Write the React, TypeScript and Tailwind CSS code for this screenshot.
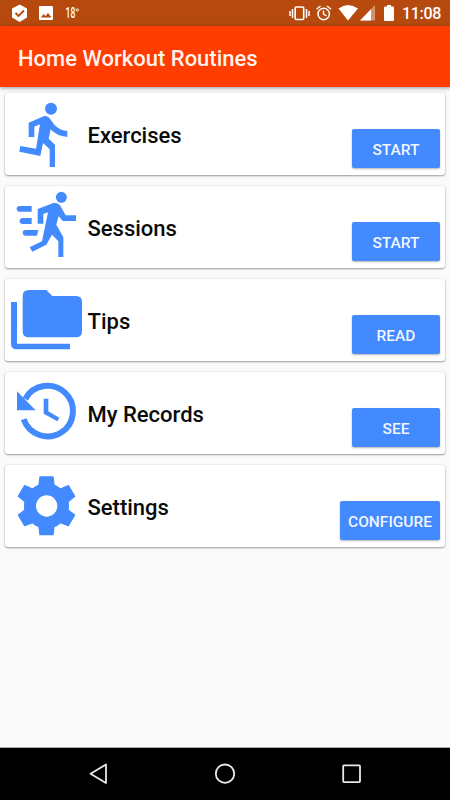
import React from "react";

const BLUE = "#448aff";

const icons = {
  run: (
    <svg viewBox="15 15 240 246" className="h-[82px] w-20 shrink-0" fill={BLUE}>
      <circle cx="153" cy="62" r="18" />
      <path d="M86 104 133 84Q144 82 150 92L163 110Q179 127 202 129V147Q169 144 152 124L146 152 165 170V237H149V184L129 165 121 204 58 191 61 174 108 182 120 109 103 116V147H86Z" />
    </svg>
  ),
  sprint: (
    <svg viewBox="15 18 240 246" className="h-[82px] w-20 shrink-0" fill={BLUE}>
      <circle cx="184" cy="52" r="16.5" />
      <path d="M113 87 160 69Q173 67 180 76L197 106H228V123H188L176 108 169 134 190 172V231H175V184L156 164 139 194 97 215 89 202 126 184 144 97 130 102V131H113Z" />
      <path d="M95 78V95H59Q50 95 50 86.500T59 78ZM95 114V132H68Q59 132 59 123T68 114ZM115 150 111 167H77Q68 167 68 158.500T77 150Z" />
    </svg>
  ),
  folders: (
    <svg viewBox="15 21 240 246" className="h-[82px] w-20 shrink-0" fill={BLUE}>
      <path d="M86 54H139L157 72H228Q246 72 246 90V178Q246 196 228 196H86Q68 196 68 178V72Q68 54 86 54Z" />
      <path d="M33 90H51V215H210V232H51Q33 232 33 215Z" />
    </svg>
  ),
  history: (
    <svg viewBox="15 16 240 246" className="h-[82px] w-20 shrink-0" fill={BLUE}>
      <path d="M76 97A76 76 0 1 1 71 158" fill="none" stroke={BLUE} strokeWidth="18" />
      <path d="M51 74V131H107L70 93ZM131 96H145V134L178 153 172 164 131 141Z" />
    </svg>
  ),
  gear: (
    <svg viewBox="15 14 240 246" className="h-[82px] w-20 shrink-0" fill={BLUE}>
      <path
        fillRule="evenodd"
        stroke={BLUE}
        strokeWidth="4"
        strokeLinejoin="round"
        d="M120 50H159L162 74Q172 78 181 86L205 76 224 108 204 124Q206 137 204 149L224 164 205 196 181 187Q172 195 162 199L159 223H120L117 199Q107 195 98 187L74 196 55 164 75 149Q73 137 75 124L55 108 74 76 98 86Q107 78 117 74ZM140 103A34 34 0 1 0 140 171A34 34 0 1 0 140 103Z"
      />
    </svg>
  ),
};

const rows = [
  { title: "Exercises", action: "START", icon: icons.run },
  { title: "Sessions", action: "START", icon: icons.sprint },
  { title: "Tips", action: "READ", icon: icons.folders },
  { title: "My Records", action: "SEE", icon: icons.history },
  { title: "Settings", action: "CONFIGURE", icon: icons.gear },
];

function StatusBar() {
  return (
    <div className="flex h-[26px] items-center bg-[#b64a0e] text-white">
      <svg viewBox="0 0 90 26" className="h-[26px] w-[90px]" fill="#fff">
        <path d="M19.700 4.500 27 8.500V17.500L19.700 22 12 17.500V8.500Z" strokeLinejoin="round" />
        <path d="M15.500 13 18.500 16 24 10.500" fill="none" stroke="#b64a0e" strokeWidth="1.800" />
        <path fillRule="evenodd" d="M40 6H52Q53 6 53 7V19Q53 20 52 20H40Q39 20 39 19V7Q39 6 40 6ZM41 17.500H51.500L48 13 45.500 16 43.500 14Z" />
        <text x="65.500" y="18.300" fontSize="14" fontWeight="500" textLength="9.800" lengthAdjust="spacingAndGlyphs">18</text>
        <circle cx="77.300" cy="10" r="1.200" fill="none" stroke="#fff" strokeWidth=".9" />
      </svg>
      <svg viewBox="286 0 112 26" className="ml-auto h-[26px] w-28" fill="none" stroke="#fff">
        <rect x="295.200" y="7" width="8.500" height="12.500" rx="1" strokeWidth="1.600" />
        <path d="M292.500 9V18M306.500 9V18M290 11V16M309 11V16" strokeWidth="1.500" />
        <circle cx="323.700" cy="14" r="5.700" strokeWidth="1.500" />
        <path d="M323.500 10.500V14.200L326.500 16M316.500 9.300 320.500 6M327 6 331 9.300" strokeWidth="1.400" />
        <path d="M338.500 8.500Q348 1.500 358 8.500L348 20.500Z" fill="#fff" stroke="none" />
        <path d="M375 5V20.500H360Z" fill="#fff" fillOpacity=".4" stroke="none" />
        <path d="M371 9.200V20.500H360Z" fill="#fff" stroke="none" />
        <path d="M387 5H391V6.500H393Q394 6.500 394 7.500V20Q394 21 393 21H385Q384 21 384 20V7.500Q384 6.500 385 6.500H387Z" fill="#fff" stroke="none" />
      </svg>
      <span className="w-[52px] pt-0.5 pl-1 text-[16px] leading-6 font-medium tracking-[-0.3px]">11:08</span>
    </div>
  );
}

export default function App() {
  return (
    <div className="flex h-[800px] w-[450px] flex-col overflow-hidden bg-[#fafafa] font-['Roboto',sans-serif]">
      <StatusBar />
      <header className="flex h-[61px] items-center bg-[#ff3d00] pl-[18px] shadow-[0_1px_4px_rgba(0,0,0,0.4)]">
        <h1 className="pt-1 text-[22px] leading-7 font-medium whitespace-nowrap text-white/95">Home Workout Routines</h1>
      </header>
      <main className="flex flex-1 flex-col gap-[11px] px-[5px] pt-1.5">
        {rows.map((row) => (
          <section
            key={row.title}
            className="flex h-[82px] shrink-0 items-center rounded-[3px] bg-white shadow-[0_1px_2px_rgba(0,0,0,0.36),0_0_2px_rgba(0,0,0,0.12)]"
          >
            {row.icon}
            <h2 className="ml-[2.500px] pt-[3px] text-[22px] leading-7 font-medium whitespace-nowrap text-[#0b0b0b]">{row.title}</h2>
            <button className="mr-[5px] mb-[7px] ml-auto h-[39px] min-w-[88px] self-end rounded-[2px] bg-[#448aff] px-2 pt-0.5 text-[15.500px] leading-5 font-medium text-white/95 shadow-[0_1px_2px_rgba(0,0,0,0.3)]">
              {row.action}
            </button>
          </section>
        ))}
      </main>
      <nav className="h-[53px] border-t border-[#aaa] bg-black">
        <svg viewBox="0 748 450 52" className="h-[52px] w-[450px]" fill="none" stroke="#e8e8e8" strokeWidth="1.800" strokeLinejoin="round">
          <path d="M90.500 773.700 106 764.500V783Z" />
          <circle cx="225" cy="773.700" r="9.200" />
          <rect x="343.200" y="765.300" width="16.800" height="16.800" rx=".8" />
        </svg>
      </nav>
    </div>
  );
}
